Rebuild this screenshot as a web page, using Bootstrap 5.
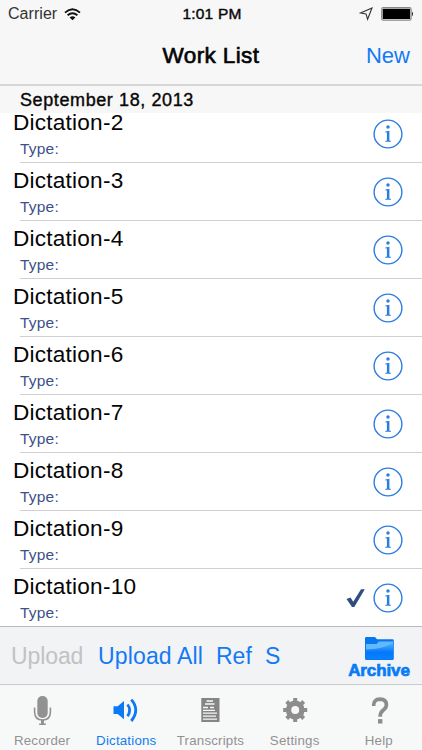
<!DOCTYPE html>
<html lang="en">
<head>
<meta charset="utf-8">
<meta name="viewport" content="width=device-width, initial-scale=1">
<title>Work List</title>
<link href="https://cdn.jsdelivr.net/npm/bootstrap@5.3.0/dist/css/bootstrap.min.css" rel="stylesheet">
<style>
body{width:422px;height:750px;overflow:hidden;font-family:"Liberation Sans",Arial,sans-serif;color:#050505;background:#fff}
.bar-top{height:86px;background:#f7f7f7;border-bottom:2px solid #d7d7d7}
.status{height:28px;font-size:16px;line-height:28px}
.status svg,.tab svg{display:block}
.carrier{letter-spacing:.05px;color:#333}
.wifi{margin-left:7px}
.clock{font-size:15.5px;letter-spacing:.2px;-webkit-text-stroke:.45px #111;padding-left:2px}
.title-row{height:56px;line-height:56px;font-size:22px}
.title-text{font-size:22.5px;line-height:inherit;font-weight:400;letter-spacing:.38px;-webkit-text-stroke:.65px #050505}
.ios{color:#147af3;text-decoration:none}
.date-head{height:27px;line-height:28px;padding-left:20px;background:#f7f7f7;font-size:18px;letter-spacing:.6px;-webkit-text-stroke:.4px #111}
.work{height:513px}
.item{height:58px;flex:none;padding-left:13px;padding-right:19.5px}
.item::before{content:"";position:absolute;left:20px;right:0;top:0;height:1px;background:#d0d0d0}
.name{font-size:22.6px;line-height:26px;letter-spacing:.22px;padding-top:6px}
.kind{font-size:15.5px;line-height:18px;letter-spacing:.2px;color:#3e508c;padding-left:7px;margin-top:4px}
.mark-side{padding-top:1px}
.tools{height:58px;background:#f2f3f5;border-top:1px solid #b9b9b9;font-size:23px;line-height:58px;padding-left:11px}
.off{color:#c1c2c4;width:87px;letter-spacing:-.1px}
.t-all{width:118px;letter-spacing:.15px}
.t-ref{width:49px}
.archive{width:64px;margin-right:11px;padding-top:9px;font-size:17px;line-height:20px;font-weight:700;color:#087bf5;letter-spacing:-.1px;-webkit-text-stroke:.7px #087bf5}
.tabs{height:66px;background:#f7f8f8;border-top:1px solid #cbcbd0}
.tab{width:84.2px;color:#929292;font-size:13.3px;line-height:18px;letter-spacing:.2px;text-decoration:none}
.tab.on{color:#147cf0}
</style>
<script src="https://cdn.jsdelivr.net/npm/bootstrap@5.3.0/dist/js/bootstrap.bundle.min.js"></script>
</head>
<body class="d-flex flex-column">
<svg width="0" height="0" class="position-absolute"><defs>
<symbol id="info" viewBox="0 0 30 30"><circle cx="15" cy="15" r="13.9" fill="none" stroke="#2b7de0" stroke-width="1.4"/><circle cx="15" cy="8" r="1.75" fill="#2b7de0"/><path d="M12.3 12.4L16.4 11.8V21.4L18 21.9V22.8H12.3V21.9L13.9 21.4V13.6L12.3 13.3Z" fill="#2b7de0"/></symbol>
</defs></svg>
<header class="bar-top flex-shrink-0">
 <div class="status row g-0 px-2">
  <div class="col d-flex align-items-center"><span class="carrier">Carrier</span>
   <svg class="wifi" width="17" height="13" viewBox="0 0 17 13" fill="none" stroke="#111" stroke-width="1.9"><path d="M1 4.6Q8.5-2 16 4.6M3.6 7.3Q8.5 3 13.4 7.3"/><path d="M5.6 9.4Q8.5 7 11.4 9.4L8.5 12.3Z" fill="#111" stroke="none"/></svg></div>
  <div class="col-auto clock">1:01 PM</div>
  <div class="col d-flex align-items-center justify-content-end">
   <svg width="14" height="14" viewBox="0 0 14 14" fill="none" stroke="#333" stroke-width="1.1"><path d="M13 1L1.6 6L7 6.9L8.6 12.2Z"/></svg>
   <svg class="ms-2" width="33" height="14" viewBox="0 0 33 14"><rect x=".7" y=".7" width="29.4" height="12.4" rx="1.6" fill="#fff" stroke="#888" stroke-width="1.2"/><rect x="1.7" y="1.7" width="27.4" height="10.4" rx=".7"/><path d="M31 4.5Q33 7 31 9.3Z" fill="#222"/></svg></div>
 </div>
 <div class="title-row row g-0">
  <div class="col"></div><h1 class="col-auto title-text m-0">Work List</h1>
  <div class="col text-end"><a class="ios d-inline-block pe-2 me-1" href="#">New</a></div>
 </div>
</header>
<div class="date-head flex-shrink-0">September 18, 2013</div>
<main class="work d-flex flex-column justify-content-end overflow-hidden flex-shrink-0" id="work"></main>
<div class="tools d-flex flex-shrink-0">
 <span class="off">Upload</span><a class="ios t-all" href="#">Upload All</a><a class="ios t-ref" href="#">Ref</a><a class="ios" href="#">S</a>
 <div class="archive ms-auto d-flex flex-column align-items-center">
  <svg width="31" height="25" viewBox="0 0 31 25"><defs><linearGradient id="fold" x1="0" y1="0" x2="0" y2="1"><stop offset="0" stop-color="#4fb4ff"/><stop offset=".4" stop-color="#1b88fb"/><stop offset=".56" stop-color="#0577fa"/><stop offset="1" stop-color="#0681ff"/></linearGradient></defs><path d="M1 2.2Q1 1 2.2 1H11L13 3.2H28.5Q29.8 3.2 29.8 4.5V22.5Q29.8 24 28.3 24H2.5Q1 24 1 22.5Z" fill="#0877ef"/><path d="M2 8H12.5L14.7 5.6H29V10Q23 15 2 15.5Z" fill="#62b9ff"/><path d="M2 13.5Q18 13 29 7V22Q29 23.2 27.8 23.2H3.2Q2 23.2 2 22Z" fill="url(#fold)"/></svg>
  <span>Archive</span></div>
</div>
<nav class="tabs d-flex flex-shrink-0">
 <a class="tab d-flex flex-column align-items-center" href="#"><svg width="40" height="47" viewBox="0 0 40 47"><rect x="15.3" y="11" width="10.4" height="22" rx="5" fill="#929292"/><path d="M12.6 22.5V27Q12.8 35 20.5 35Q28.3 35 28.4 27V22.5M17.1 39.2H23.9" fill="none" stroke="#929292" stroke-width="1.6"/><path d="M20.5 35V39" stroke="#929292" stroke-width="3"/></svg>Recorder</a>
 <a class="tab on d-flex flex-column align-items-center" href="#"><svg width="40" height="47" viewBox="0 0 40 47"><path d="M7.5 21.3H11.7L18 16V34.2L11.7 29H7.5Z" fill="#0d79f5"/><path d="M21.5 19.5Q25.8 25 21.5 31.2M25.3 14.7Q34.2 25 25.3 36" fill="none" stroke="#0d79f5" stroke-width="2.8"/></svg>Dictations</a>
 <a class="tab d-flex flex-column align-items-center" href="#"><svg width="40" height="47" viewBox="0 0 40 47"><path d="M11.3 13H29.5V37H11.3Z" fill="#858585"/><path d="M16.5 16H23M15 19H24.5M13 22.5H18M20 22.5H24M13 25.3H25M13 28.2H27M13 31.2H26M13 34.2H27" stroke="#f7f8f8" stroke-width="1.3"/></svg>Transcripts</a>
 <a class="tab d-flex flex-column align-items-center" href="#"><svg width="40" height="47" viewBox="0 0 40 47"><g transform="translate(20.2 25)" fill="none" stroke="#8d8d8d"><circle r="6.7" stroke-width="5.4"/><path d="M0-12V-8M0 8V12M-12 0H-8M8 0H12M-8.5-8.5L-5.7-5.7M5.7 5.7L8.5 8.5M-8.5 8.5L-5.7 5.7M5.7-5.7L8.5-8.5" stroke-width="4"/></g></svg>Settings</a>
 <a class="tab d-flex flex-column align-items-center" href="#"><svg width="40" height="47" viewBox="0 0 40 47"><path d="M14.6 21Q14.4 14.2 20.9 14.2Q27.4 14.4 27.4 20Q27.4 22.8 24.4 25Q21.1 27.4 21.1 31.7" fill="none" stroke="#8c8c8c" stroke-width="3.7"/><rect x="19" y="34.1" width="4.4" height="4.4" fill="#8c8c8c"/></svg>Help</a>
</nav>
<script>
const work=document.getElementById('work');
for(let n=2;n<=10;n++){
 const tick=n===10?'<svg class="me-2" width="19" height="20" viewBox="0 0 19 20"><path d="M.5 11L4.5 9.5L7.2 13.8L15 1.2H18.8L8.3 19H6Z" fill="#304d80"/></svg>':'';
 work.insertAdjacentHTML('beforeend',`<div class="item position-relative d-flex"><div class="flex-grow-1"><div class="name">Dictation-${n}</div><div class="kind">Type:</div></div><div class="mark-side d-flex align-items-center">${tick}<svg width="30" height="30"><use href="#info"/></svg></div></div>`);
}
</script>
</body>
</html>
